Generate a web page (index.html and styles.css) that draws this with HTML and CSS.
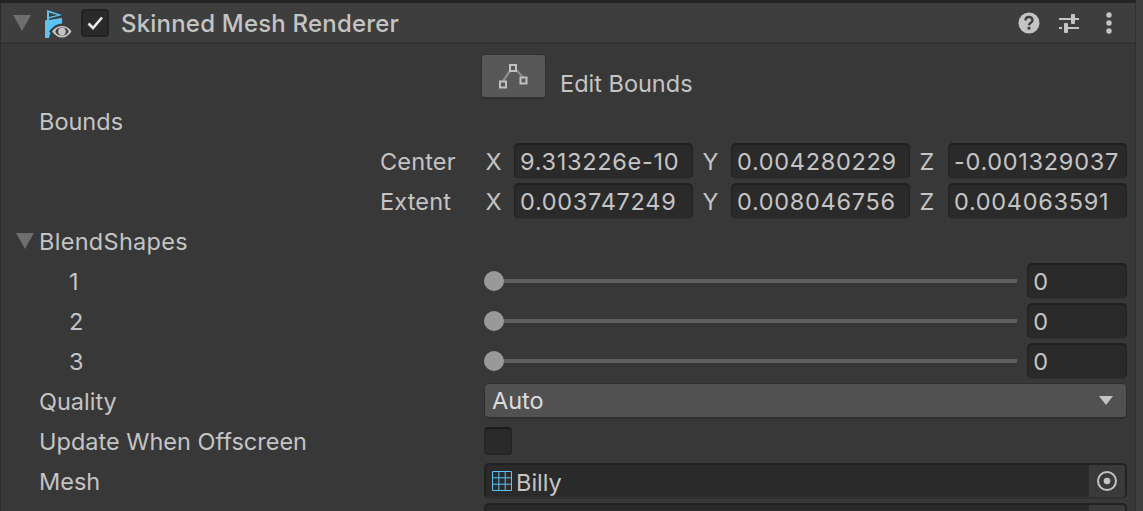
FILE: index.html
```html
<!DOCTYPE html>
<html lang="en">
<head>
<meta charset="utf-8">
<title>Skinned Mesh Renderer</title>
<link rel="stylesheet" href="styles.css">
</head>
<body>
<div class="inspector">
  <header class="header">
    <span class="tri"></span>
    <svg class="comp-icon" width="28" height="28" viewBox="0 0 28 28">
      <path d="M3 0 18 5 5 8.500V10L18 8V16C11 16.500 6 21 5 28H1V10.500L3 10Z" fill="#5cc3f5"/>
      <path d="M5 2.500 13.500 5 5 7Z" fill="#3e3e3e"/>
      <path d="M5 21.500Q11 13.500 18 13.500T30 21.500Q25 29 18 29T5 21.500Z" fill="#3e3e3e"/>
      <path d="M8 21.500Q12 16 18 16T27.500 21.500Q23.500 27.500 18 27.500T8 21.500Z" fill="#c4c4c4"/>
      <ellipse cx="18" cy="21.500" rx="6.500" ry="4" fill="#3e3e3e"/>
      <circle cx="18" cy="21.500" r="3.800" fill="#c4c4c4"/>
    </svg>
    <span class="check"><svg width="18" height="18" viewBox="0 0 18 18"><path d="M2.500 9.500 7 14 16 3.500" fill="none" stroke="#ededed" stroke-width="2.600"/></svg></span>
    <span class="title">Skinned Mesh Renderer</span>
    <span class="tools">
      <svg class="help" width="22" height="22" viewBox="0 0 22 22"><circle cx="11" cy="11" r="10.500" fill="#c4c4c4"/><path d="M7.500 8.500C7.500 3.800 14.500 3.800 14.500 8.200 14.500 10.700 11 10.700 11 13.200" fill="none" stroke="#3e3e3e" stroke-width="2.400"/><rect x="9.600" y="14.800" width="2.800" height="2.800" fill="#3e3e3e"/></svg>
      <svg class="sliders" width="22" height="22" viewBox="0 0 22 22"><path d="M1 7h20M1 16h3M7 16h14" stroke="#c4c4c4" stroke-width="2" fill="none"/><rect x="13" y="2" width="4" height="10" rx="1" fill="#c4c4c4"/><rect x="6" y="11" width="4" height="10" rx="1" fill="#c4c4c4"/></svg>
      <svg width="10" height="24" viewBox="0 0 10 24"><circle cx="5" cy="4" r="2.700" fill="#c4c4c4"/><circle cx="5" cy="12" r="2.700" fill="#c4c4c4"/><circle cx="5" cy="20" r="2.700" fill="#c4c4c4"/></svg>
    </span>
  </header>

  <div class="edit-row">
    <button class="edit-btn"><svg width="32" height="26" viewBox="0 0 32 26"><path d="M5 18 12 8M18 7 25 14" stroke="#8c8c8c" stroke-width="2.200" fill="none"/><g fill="#585858" stroke="#c0c0c0" stroke-width="2"><rect x="2" y="18.500" width="6" height="6"/><rect x="12" y="2" width="6" height="6"/><rect x="22.500" y="14.500" width="6" height="6"/></g></svg></button>
    <span class="edit-label">Edit Bounds</span>
  </div>

  <div class="row"><span class="label">Bounds</span></div>

  <div class="row">
    <span class="vec-label">Center</span>
    <div class="vec">
      <span class="axis">X</span><span class="field">9.313226e-10</span>
      <span class="axis">Y</span><span class="field">0.004280229</span>
      <span class="axis">Z</span><span class="field">-0.001329037</span>
    </div>
  </div>
  <div class="row">
    <span class="vec-label">Extent</span>
    <div class="vec">
      <span class="axis">X</span><span class="field">0.003747249</span>
      <span class="axis">Y</span><span class="field">0.008046756</span>
      <span class="axis">Z</span><span class="field">0.004063591</span>
    </div>
  </div>

  <div class="row foldout"><span class="tri tri-small"></span><span class="fold-label">BlendShapes</span></div>

  <div class="row"><span class="label sub">1</span><div class="slider"><span class="track"><span class="knob"></span></span><span class="field num">0</span></div></div>
  <div class="row"><span class="label sub">2</span><div class="slider"><span class="track"><span class="knob"></span></span><span class="field num">0</span></div></div>
  <div class="row"><span class="label sub">3</span><div class="slider"><span class="track"><span class="knob"></span></span><span class="field num">0</span></div></div>

  <div class="row"><span class="label">Quality</span><div class="dropdown"><span>Auto</span><span class="caret"></span></div></div>
  <div class="row"><span class="label">Update When Offscreen</span><span class="toggle"></span></div>
  <div class="row"><span class="label">Mesh</span>
    <div class="object">
      <svg width="20" height="20" viewBox="0 0 20 20"><path d="M.500.500h19v19H.500zM.500 6.800h19M.500 13.200h19M6.800.500v19M13.200.500v19" fill="none" stroke="#5cc3f5" stroke-width="1"/></svg>
      <span class="obj-name">Billy</span>
      <span class="picker"><svg width="20" height="20" viewBox="0 0 20 20"><circle cx="10" cy="10" r="9" fill="none" stroke="#c4c4c4" stroke-width="2"/><circle cx="10" cy="10" r="3.300" fill="#c4c4c4"/></svg></span>
    </div>
  </div>
  <div class="row"><span class="label"></span><div class="object"><span class="picker"></span></div></div>
</div>
</body>
</html>
```

FILE: styles.css
```css
* { box-sizing: border-box; }
html, body { margin: 0; height: 100%; overflow: hidden; }
body {
  width: 1143px;
  height: 511px;
  background: #383838;
  border-right: 7px solid #3f3f3f;
  font-family: Inter, "Liberation Sans", sans-serif;
  font-size: 23.5px;
  color: #c4c4c4;
}
.inspector {
  width: 1136px;
  height: 511px;
  overflow: hidden;
  border-left: 1px solid #2b2b2b;
  border-right: 1px solid #2f2f2f;
  border-top: 3px solid #232323;
}
.header {
  height: 41px;
  background: #3e3e3e;
  border-bottom: 2px solid #333;
  display: flex;
  align-items: center;
  padding-left: 12px;
}
.tri {
  width: 0; height: 0;
  border-left: 9px solid transparent;
  border-right: 9px solid transparent;
  border-top: 16px solid #6e6e6e;
  margin-right: 13px;
}
.comp-icon { margin-right: 9px; margin-top: 3px; flex: none; }
.check {
  width: 28px; height: 28px;
  background: #2a2a2a;
  border: 2px solid #222;
  border-radius: 4px;
  display: flex; align-items: center; justify-content: center;
  margin-right: 12px;
}
.title { font-size: 24px; font-weight: 500; letter-spacing: .2px; padding-top: 2px; }
.tools {
  margin-left: auto;
  display: flex;
  align-items: center;
  padding-right: 21px;
}
.help { margin-right: 18px; }
.sliders { margin-right: 24px; }
.edit-row {
  height: 57px;
  padding: 10px 0 0 480px;
  display: flex;
  align-items: flex-start;
}
.edit-btn {
  width: 65px; height: 45px;
  padding: 0;
  background: #585858;
  border: 1px solid #303030;
  border-bottom-width: 2px;
  border-radius: 4px;
  display: flex; align-items: center; justify-content: center;
}
.edit-label { margin: 15px 0 0 14px; line-height: 29px; }
.row {
  height: 40px;
  display: flex;
  align-items: center;
  padding-left: 38px;
}
.label { width: 445px; flex: none; }
.label.sub { padding-left: 30px; }
.vec-label { width: 445px; flex: none; padding-left: 341px; letter-spacing: .15px; }
.vec { display: flex; align-items: center; }
.axis { width: 30px; flex: none; padding-left: 1.500px; }
.vec .axis + .field { margin-right: 8px; }
.vec .field:last-child { margin-right: 0; }
.field {
  width: 179px;
  height: 36px;
  background: #2a2a2a;
  border: 1px solid #212121;
  border-top: 2px solid #1f1f1f;
  border-bottom-color: #313131;
  border-radius: 5px;
  display: flex;
  align-items: center;
  padding-left: 5px;
  white-space: nowrap;
  overflow: hidden;
  letter-spacing: .7px;
}
.foldout { padding-left: 15px; }
.tri-small { margin-right: 5px; }
.fold-label { line-height: 40px; padding-top: 1px; letter-spacing: .3px; }
.slider { display: flex; align-items: center; width: 643px; }
.track {
  width: 534px;
  height: 4px;
  background: #5e5e5e;
  margin-right: 10px;
  position: relative;
}
.knob {
  position: absolute;
  left: 0; top: -8px;
  width: 20px; height: 20px;
  border-radius: 50%;
  background: #999;
}
.field.num { width: 100px; padding-left: 5px; }
.dropdown {
  width: 643px;
  height: 36px;
  background: #515151;
  border: 1px solid #2e2e2e;
  border-width: 1px 1px 2px;
  border-radius: 5px;
  display: flex;
  align-items: center;
  justify-content: space-between;
  padding: 0 13px 0 7px;
  color: #dcdcdc;
}
.caret {
  width: 0; height: 0;
  border-left: 7px solid transparent;
  border-right: 7px solid transparent;
  border-top: 9px solid #c4c4c4;
}
.toggle {
  width: 28px; height: 28px;
  background: #2a2a2a;
  border: 1px solid #222;
  border-top: 2px solid #1c1c1c;
  border-radius: 4px;
}
.object {
  width: 643px;
  height: 36px;
  background: #2a2a2a;
  border: 2px solid #222;
  border-bottom-color: #303030;
  border-radius: 5px;
  display: flex;
  align-items: center;
  padding-left: 6px;
  overflow: hidden;
}
.obj-name { margin-left: 4px; padding-top: 2px; }
.picker {
  margin-left: auto;
  width: 36px;
  height: 34px;
  background: #3a3a3a;
  display: flex; align-items: center; justify-content: center;
}
```
